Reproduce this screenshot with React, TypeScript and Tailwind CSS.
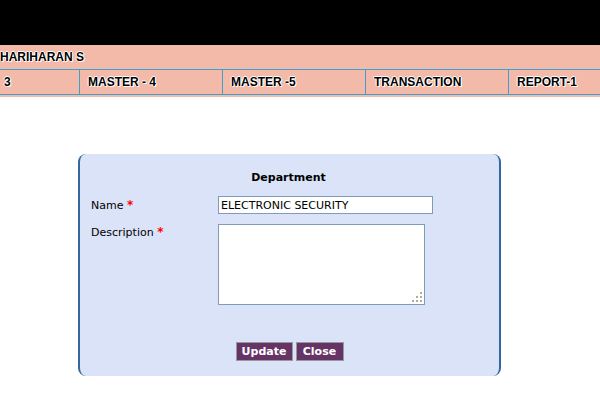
import React from "react";

const navFont = "font-['Liberation_Sans',Arial,sans-serif] font-bold text-[12px] text-black [text-shadow:1px_1px_0_#fff,-1px_0_0_#fff,0_-1px_0_#fff,1px_0_0_#fff]";

export default function App() {
  const cells = ["MASTER - 4", "MASTER -5", "TRANSACTION", "REPORT-1"];
  return (
    <div className="w-[600px] h-[400px] bg-white overflow-hidden">
      <div className="h-[45px] bg-black" />
      <div className="bg-[#f4baa9] pb-[2px]">
        <div className={`h-[24px] flex items-center ${navFont}`}>HARIHARAN S</div>
        <div className="h-[26px] border-y border-[#3fa0cf] overflow-hidden">
          <div className="flex h-full">
            <div className={`w-[80px] shrink-0 h-full border-r border-[#3fa0cf] flex items-center pl-[4px] ${navFont}`}>
              3
            </div>
            {cells.map((c) => (
              <div
                key={c}
                className={`w-[143px] shrink-0 h-full border-r border-[#3fa0cf] flex items-center pl-[8px] ${navFont}`}
              >
                {c}
              </div>
            ))}
          </div>
        </div>
      </div>
      <div className="mt-[57px] ml-[78px] w-[423px] h-[222px] bg-[#dbe3f8] border-x-2 border-[#33679f] rounded-[8px] font-['DejaVu_Sans',Verdana,sans-serif] text-[11px] text-black flex flex-col">
        <div className="pt-[17px] text-center font-bold leading-[13px] pr-[2px]">Department</div>
        <div className="mt-[12px] flex items-center pl-[11px]">
          <div className="w-[127px]">
            Name <span className="text-[#ff0000] font-bold text-[12px]">*</span>
          </div>
          <input
            readOnly
            value="ELECTRONIC SECURITY"
            className="w-[215px] h-[18px] bg-white border border-[#7f9db9] px-[2px] text-[11px] font-['DejaVu_Sans',Verdana,sans-serif] outline-none"
          />
        </div>
        <div className="mt-[9px] flex items-start pl-[11px]">
          <div className="w-[127px] pt-[1px] leading-[14px]">
            Description <span className="text-[#ff0000] font-bold text-[12px]">*</span>
          </div>
          <div className="relative w-[207px] h-[81px]">
            <textarea className="w-full h-full bg-white border border-[#7f9db9] outline-none resize-none block" />
            <svg className="absolute right-[3px] bottom-[3px]" width="10" height="10" viewBox="0 0 10 10">
              <g fill="#b3ab95">
                <rect x="8" y="0" width="2" height="2" />
                <rect x="4" y="4" width="2" height="2" />
                <rect x="8" y="4" width="2" height="2" />
                <rect x="0" y="8" width="2" height="2" />
                <rect x="4" y="8" width="2" height="2" />
                <rect x="8" y="8" width="2" height="2" />
              </g>
            </svg>
          </div>
        </div>
        <div className="mt-[37px] flex justify-center gap-[3px]">
          <button className="w-[57px] h-[19px] bg-[#663366] border border-[#999999] text-white font-bold text-[11px] font-['DejaVu_Sans',Verdana,sans-serif] leading-none">
            Update
          </button>
          <button className="w-[48px] h-[19px] bg-[#663366] border border-[#999999] text-white font-bold text-[11px] font-['DejaVu_Sans',Verdana,sans-serif] leading-none">
            Close
          </button>
        </div>
      </div>
    </div>
  );
}
